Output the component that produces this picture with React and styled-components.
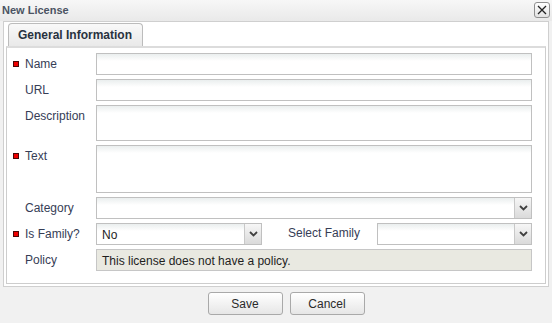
import React from "react";
import styled, { createGlobalStyle } from "styled-components";

const Global = createGlobalStyle`
  html, body { margin: 0; padding: 0; background: #f1f1f1; }
  body { font-family: "Liberation Sans", Arial, sans-serif; font-size: 12px; }
  * { box-sizing: border-box; }
`;

const Dialog = styled.div`
  width: 552px;
  height: 323px;
  background: #f1f1f1;
  display: flex;
  flex-direction: column;
`;

const TitleBar = styled.div`
  height: 21px;
  display: flex;
  align-items: center;
  justify-content: space-between;
  padding: 0 2px 0 2px;
  background: linear-gradient(#f7f7f7, #e9e9e9);
`;

const Title = styled.div`
  font-weight: bold;
  font-size: 11px;
  color: #4a5362;
  margin-top: -2px;
`;

const CloseBtn = styled.div`
  width: 16px;
  height: 16px;
  border: 1px solid #8f8f8f;
  border-radius: 3px;
  background: linear-gradient(#ffffff, #e2e2e2);
  display: flex;
  align-items: center;
  justify-content: center;
  margin-top: -2px;
`;

const Panel = styled.div`
  margin: 0 3px;
  border: 1px solid #cfcfcf;
  background: #fff;
  padding: 1px 2px 2px 2px;
`;

const TabStrip = styled.div`
  display: flex;
  padding-left: 2px;
`;

const Tab = styled.div`
  height: 23px;
  padding: 0 10px 0 9px;
  display: flex;
  align-items: center;
  border: 1px solid #bcbcbc;
  border-bottom: none;
  border-radius: 4px 4px 0 0;
  background: linear-gradient(#f9f9f9, #e9e9e9);
  font-weight: bold;
  font-size: 12px;
  color: #28323f;
`;

const TabBody = styled.div`
  border: 1px solid #cdcdcd;
  border-top: 2px solid #dcdcdc;
  padding: 5px 13px 12px 5px;
  display: flex;
  flex-direction: column;
  gap: 4px;
`;

const Row = styled.div`
  display: flex;
  align-items: flex-start;
`;

const LabelCell = styled.div`
  width: 84px;
  flex: none;
  display: flex;
  align-items: center;
  padding-top: 3px;
  height: 19px;
  color: #363d56;
  font-size: 12px;
`;

const Marker = styled.span`
  width: 6px;
  height: 6px;
  margin-left: 1px;
  margin-right: 6px;
  background: #ee0000;
  border: 1px solid #4a0808;
  flex: none;
  visibility: ${(p) => (p.$show ? "visible" : "hidden")};
`;

const Field = styled.div`
  flex: 1;
  height: ${(p) => p.$h || 22}px;
  border: 1px solid #c0c0c0;
  background: linear-gradient(#eaeeee, #ffffff 7px);
`;

const SelectBox = styled.div`
  ${(p) => (p.$w ? `width: ${p.$w}px; flex: none;` : "flex: 1;")}
  height: 22px;
  border: 1px solid #c0c0c0;
  background: linear-gradient(#eaeeee, #ffffff 7px);
  display: flex;
  align-items: stretch;
`;

const SelectValue = styled.div`
  flex: 1;
  padding-left: 5px;
  display: flex;
  align-items: center;
  font-size: 12px;
  color: #1e1e1e;
  padding-top: 2px;
`;

const Arrow = styled.div`
  width: 17px;
  border-left: 1px solid #c8c8c8;
  background: linear-gradient(#f6f6f6, #dadada);
  display: flex;
  align-items: center;
  justify-content: center;
`;

const InlineLabel = styled.div`
  width: 89px;
  margin-left: 26px;
  flex: none;
  padding-top: 3px;
  color: #363d56;
  font-size: 12px;
`;

const PolicyBox = styled.div`
  flex: 1;
  height: 22px;
  border: 1px solid #c6c6c6;
  background: #e9e9e1;
  display: flex;
  align-items: center;
  padding-left: 5px;
  padding-top: 1px;
  font-size: 12px;
  color: #1e1e1e;
`;

const Footer = styled.div`
  display: flex;
  justify-content: center;
  gap: 7px;
  padding: 5px 0 0 20px;
`;

const Button = styled.div`
  width: 75px;
  height: 23px;
  border: 1px solid #a9a9a9;
  border-radius: 3px;
  background: linear-gradient(#ffffff, #e6e6e6);
  display: flex;
  align-items: center;
  justify-content: center;
  font-size: 12px;
  color: #2a2a2a;
`;

const Chevron = () => (
  <svg width="9" height="6" viewBox="0 0 9 6">
    <path d="M1 1 L4.5 4.5 L8 1" stroke="#404040" strokeWidth="1.8" fill="none" />
  </svg>
);

const Select = ({ w, value }) => (
  <SelectBox $w={w}>
    <SelectValue>{value}</SelectValue>
    <Arrow>
      <Chevron />
    </Arrow>
  </SelectBox>
);

const Label = ({ req, children }) => (
  <LabelCell>
    <Marker $show={req} />
    {children}
  </LabelCell>
);

export default function App() {
  return (
    <Dialog>
      <Global />
      <TitleBar>
        <Title>New License</Title>
        <CloseBtn>
          <svg width="10" height="10" viewBox="0 0 10 10">
            <path d="M1 1 L9 9 M9 1 L1 9" stroke="#222" strokeWidth="1.3" />
          </svg>
        </CloseBtn>
      </TitleBar>
      <Panel>
        <TabStrip>
          <Tab>General Information</Tab>
        </TabStrip>
        <TabBody>
          <Row>
            <Label req>Name</Label>
            <Field />
          </Row>
          <Row>
            <Label>URL</Label>
            <Field />
          </Row>
          <Row>
            <Label>Description</Label>
            <Field $h={36} />
          </Row>
          <Row>
            <Label req>Text</Label>
            <Field $h={48} />
          </Row>
          <Row>
            <Label>Category</Label>
            <Select />
          </Row>
          <Row>
            <Label req>Is Family?</Label>
            <Select w={166} value="No" />
            <InlineLabel>Select Family</InlineLabel>
            <Select />
          </Row>
          <Row>
            <Label>Policy</Label>
            <PolicyBox>This license does not have a policy.</PolicyBox>
          </Row>
        </TabBody>
      </Panel>
      <Footer>
        <Button>Save</Button>
        <Button>Cancel</Button>
      </Footer>
    </Dialog>
  );
}
